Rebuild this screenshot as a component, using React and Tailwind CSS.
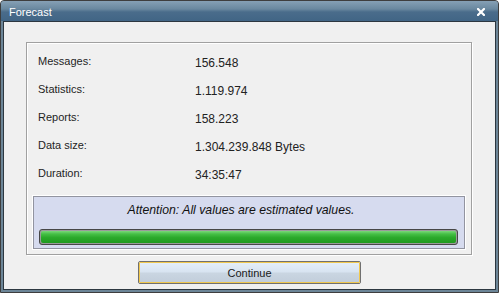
import React from "react";

const rows = [
  ["Messages:", "156.548"],
  ["Statistics:", "1.119.974"],
  ["Reports:", "158.223"],
  ["Data size:", "1.304.239.848 Bytes"],
  ["Duration:", "34:35:47"],
];

export default function App() {
  return (
    <div
      className="w-[499px] h-[293px] flex flex-col border border-[#3e3e3e] rounded-t-[4px] overflow-hidden bg-[#6c8597]"
      style={{ fontFamily: '"Liberation Sans", Arial, sans-serif' }}
    >
      {/* Title bar */}
      <div className="h-[20px] flex items-start justify-between bg-[linear-gradient(to_bottom,#86a0b5_0%,#6a889f_40%,#4a6c8b_55%,#416585_100%)]">
        <span className="mt-[2px] ml-[8px] text-[11px] leading-[18px] text-white">Forecast</span>
        <svg className="mt-[7px] mr-[13px]" width="8" height="8" viewBox="0 0 8 8">
          <path d="M1 1 L7 7 M7 1 L1 7" stroke="#ffffff" strokeWidth="2.2" strokeLinecap="square" />
        </svg>
      </div>
      {/* Frame body */}
      <div className="flex-1 flex flex-col px-[2px] pb-[2px]">
        <div className="flex-1 flex flex-col border border-[#2c3740] bg-[#f0f0f0] pt-[20px] px-[22px]">
          {/* Group box */}
          <div className="w-[446px] h-[213px] flex flex-col border border-[#a0a0a0] shadow-[inset_1px_1px_0_#ffffff,1px_1px_0_#ffffff] pt-[4px]">
            <div className="flex flex-col pl-[11px]">
              {rows.map(([label, value]) => (
                <div key={label} className="h-[28px] flex">
                  <div className="w-[157px] text-[11px] leading-[28px] text-[#1e1e1e]">{label}</div>
                  <div className="pt-[2px] text-[12px] leading-[28px] text-[#222222]">{value}</div>
                </div>
              ))}
            </div>
            {/* Attention panel */}
            <div className="mt-[9px] mx-[6px] h-[53px] flex flex-col border border-[#9294a0] bg-[#d6dbef] shadow-[0_0_0_1px_#ffffff] pt-[5px]">
              <div className="text-center italic text-[12.25px] leading-[16px] text-[#111111] pr-[16px]">
                Attention: All values are estimated values.
              </div>
              <div className="mt-[11px] ml-[5px] w-[419px] h-[16px] rounded-[3px] border border-[#474747] bg-[#9a9a9a] p-[1px]">
                <div className="w-full h-full rounded-[2px] bg-[linear-gradient(to_bottom,#7ad87a_0%,#45bf45_25%,#2aa92a_55%,#1f9a1f_100%)]" />
              </div>
            </div>
          </div>
          {/* Button */}
          <div className="mt-[6px] flex justify-center">
            <button className="w-[223px] h-[23px] rounded-[2px] border border-[#707070] p-0">
              <div className="w-full h-full rounded-[1px] border border-[#f1c84e] flex items-center justify-center bg-[linear-gradient(to_bottom,#e4eef9_0%,#d8e4f1_45%,#c9d5e1_55%,#c2cedb_100%)] text-[11px] leading-[14px] text-[#1a1a1a]">
                Continue
              </div>
            </button>
          </div>
        </div>
      </div>
    </div>
  );
}
